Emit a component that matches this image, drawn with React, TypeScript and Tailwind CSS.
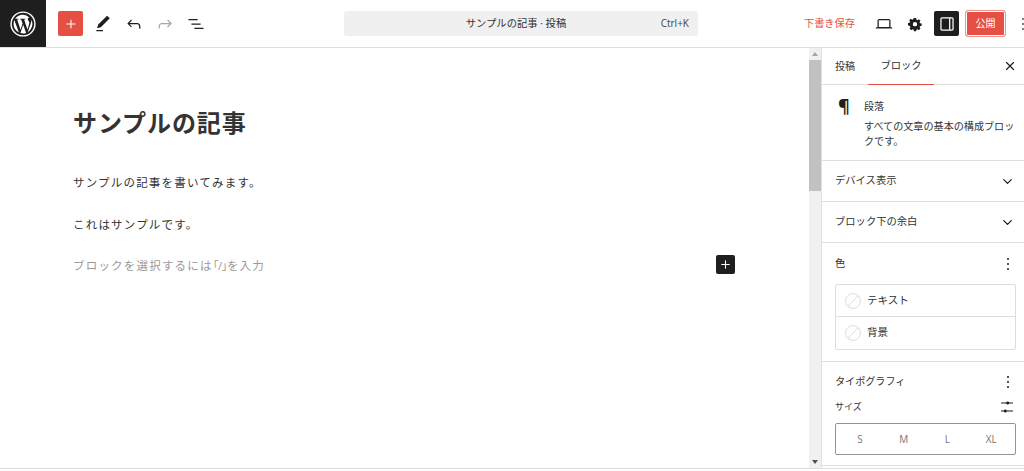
import React from 'react';
import { Plus, X, ChevronDown } from 'lucide-react';

const FONT = "font-['Open_Sans','Noto_Sans_CJK_JP',sans-serif]";

const WpLogo = () => (
  <svg width="26" height="26" viewBox="0 0 24 24" fill="none">
    <circle cx="12" cy="12" r="11" stroke="#fff" strokeWidth="1.3" />
    <path
      d="M3.3 12c0 3.4 2 6.4 4.9 7.8L4 8.4A8.7 8.7 0 0 0 3.3 12zm14.6-.4c0-1.1-.4-1.8-.7-2.4-.4-.7-.8-1.2-.8-1.9 0-.7.6-1.4 1.4-1.4h.1A8.7 8.7 0 0 0 4.7 7.2h.6c.9 0 2.3-.1 2.3-.1.5 0 .5.7 0 .7 0 0-.5.1-1 .1l3.1 9.3 1.9-5.6-1.3-3.7c-.5 0-.9-.1-.9-.1-.5 0-.4-.7 0-.7 0 0 1.4.1 2.3.1.9 0 2.3-.1 2.3-.1.5 0 .5.7 0 .7 0 0-.5.1-1 .1l3.1 9.2.9-2.9c.4-1.1.6-1.9.6-2.6zm-5.7 1.2-2.6 7.5a8.7 8.7 0 0 0 5.3-.1l-.1-.1-2.6-7.3zm7.4-4.9c0 .3.1.6.1.9 0 .9-.2 1.9-.7 3.1l-2.7 7.7A8.7 8.7 0 0 0 19.6 7.9z"
      fill="#fff"
    />
  </svg>
);

const Pencil = () => (
  <svg width="24" height="24" viewBox="0 0 24 24" fill="#1e1e1e">
    <path d="M20.1 5.1 16.9 2 6.2 12.7l-1.3 4.4 4.5-1.3L20.1 5.1zM4 20.8h8v-1.5H4v1.5z" />
  </svg>
);

const Undo = ({ color }: { color: string }) => (
  <svg width="24" height="24" viewBox="0 0 24 24" fill={color}>
    <path d="M18.3 11.7c-.6-.6-1.4-.9-2.3-.9H6.7l2.9-3.3-1.1-1-4.5 5L8.5 16l1-1-2.7-2.7H16c.5 0 .9.2 1.3.5 1 1 1 3.4 1 4.5v.3h1.5v-.2c0-1.5 0-4.3-1.5-5.7z" />
  </svg>
);

const Redo = ({ color }: { color: string }) => (
  <svg width="24" height="24" viewBox="0 0 24 24" fill={color}>
    <path d="M15.6 6.5l-1.1 1 2.9 3.3H8c-.9 0-1.7.3-2.3.9-1.4 1.5-1.4 4.2-1.4 5.6v.2h1.5v-.3c0-1.1 0-3.5 1-4.5.3-.3.7-.5 1.3-.5h9.2L14.5 15l1.1 1.1 4.6-4.6-4.6-5z" />
  </svg>
);

const ListView = () => (
  <svg width="24" height="24" viewBox="0 0 24 24" fill="#1e1e1e">
    <path d="M3 6h11v1.5H3V6zm3.5 5.3h11v1.5h-11v-1.5zm3.5 5.2h11V18H10v-1.5z" />
  </svg>
);

const Laptop = () => (
  <svg width="24" height="24" viewBox="0 0 24 24" fill="#1e1e1e">
    <path d="M20.5 16h-.7V8c0-1.1-.9-2-2-2H6.2c-1.1 0-2 .9-2 2v8h-.7c-.8 0-1.5.7-1.5 1.5h20c0-.8-.7-1.5-1.5-1.5zM5.7 8c0-.3.2-.5.5-.5h11.6c.3 0 .5.2.5.5v7.6H5.7V8z" />
  </svg>
);

const Gear = () => (
  <svg width="24" height="24" viewBox="0 0 24 24" fill="#1e1e1e">
    <path
      fillRule="evenodd"
      clipRule="evenodd"
      d="M10.3 3h3.4l.5 2.5c.5.2 1 .4 1.4.7l2.2-1.4 2.4 2.4-1.4 2.2c.3.4.5.9.7 1.4l2.5.5v3.4l-2.5.5c-.2.5-.4 1-.7 1.4l1.4 2.2-2.4 2.4-2.2-1.4c-.4.3-.9.5-1.4.7l-.5 2.5h-3.4l-.5-2.5c-.5-.2-1-.4-1.4-.7l-2.2 1.4-2.4-2.4 1.4-2.2c-.3-.4-.5-.9-.7-1.4L1.5 14v-3.4l2.5-.5c.2-.5.4-1 .7-1.4L3.3 6.5l2.4-2.4 2.2 1.4c.4-.3.9-.5 1.4-.7L10.3 3zM12 15.5a3.3 3.3 0 1 0 0-6.6 3.3 3.3 0 0 0 0 6.6z"
    />
  </svg>
);

const SidebarToggle = () => (
  <svg width="24" height="24" viewBox="0 0 24 24" fill="#fff">
    <path d="M18 4H6c-1.1 0-2 .9-2 2v12c0 1.1.9 2 2 2h12c1.1 0 2-.9 2-2V6c0-1.1-.9-2-2-2zm-12 1.5h8.5v13H6c-.3 0-.5-.2-.5-.5V6c0-.3.2-.5.5-.5zm12.5 12.5c0 .3-.2.5-.5.5h-2v-13h2c.3 0 .5.2.5.5v12z" />
  </svg>
);

const Sliders = () => (
  <svg width="12" height="12" viewBox="0 0 12 12" fill="#1e1e1e" className="mr-[3px]">
    <path d="M0 2.5h5.2a1.6 1.6 0 0 0 3 0H12v-1H8.2a1.6 1.6 0 0 0-3 0H0v1zM0 10.5h2.8a1.6 1.6 0 0 0 3 0H12v-1H5.8a1.6 1.6 0 0 0-3 0H0v1z" />
  </svg>
);

const NoColor = () => (
  <svg width="16" height="16" viewBox="0 0 16 16" fill="none" stroke="#ddd">
    <circle cx="8" cy="8" r="7.5" />
    <path d="M2.7 13.3 13.3 2.7" />
  </svg>
);

const Kebab = ({ color = '#1e1e1e', className = '' }: { color?: string; className?: string }) => (
  <svg width="14" height="14" viewBox="0 0 14 14" fill={color} className={className}>
    <circle cx="7" cy="2" r="1" />
    <circle cx="7" cy="7" r="1" />
    <circle cx="7" cy="12" r="1" />
  </svg>
);

const ColorRow = ({ label, last }: { label: string; last?: boolean }) => (
  <div className={`flex h-[32px] items-center gap-[6px] pl-[9px] text-[10.5px] text-[#333] ${last ? '' : 'border-b border-[#ddd]'}`}>
    <NoColor />
    <span>{label}</span>
  </div>
);

const CollapsedPanel = ({ label }: { label: string }) => (
  <div className="flex h-[41px] items-center justify-between border-b border-[#e0e0e0] pl-[13px] pr-[9px]">
    <span className="text-[10.3px] text-[#333]">{label}</span>
    <ChevronDown size={15} strokeWidth={2} color="#1e1e1e" />
  </div>
);

const App = () => {
  return (
    <div className={`flex h-[471px] w-[1024px] flex-col overflow-hidden bg-white ${FONT}`}>
      {/* top bar */}
      <header className="flex h-[48px] shrink-0 items-center border-b border-[#e0e0e0] [&>*]:shrink-0">
        <div className="flex h-[47px] w-[46px] items-center justify-center bg-[#1e1e1e]">
          <WpLogo />
        </div>
        <div className="ml-[12px] flex h-[25px] w-[25px] items-center justify-center rounded-[2px] bg-[#e64f44]">
          <Plus size={14} color="#fff" strokeWidth={1.8} />
        </div>
        <div className="ml-[8px] flex items-center gap-[7px] [&>svg]:h-[20px] [&>svg]:w-[24px]">
          <Pencil />
          <Undo color="#1e1e1e" />
          <Redo color="#a8a8a8" />
          <ListView />
        </div>
        <div className="relative ml-[136px] flex h-[25px] w-[354px] items-center justify-center rounded-[3px] bg-[#f0f0f0] pr-[10px] text-[10.3px] text-[#333]">
          <span>サンプルの記事 · 投稿</span>
          <span className="absolute right-[9px] text-[10px] text-[#444]">Ctrl+K</span>
        </div>
        <span className="ml-[106px] w-[51px] text-[10.2px] text-[#e64f44]">下書き保存</span>
        <div className="ml-[19px] flex items-center gap-[11px]">
          <div className="flex w-[20px] justify-center"><Laptop /></div>
          <div className="flex w-[20px] justify-center [&>svg]:h-[16px] [&>svg]:w-[16px]"><Gear /></div>
        </div>
        <div className="ml-[9px] flex h-[25px] w-[25px] items-center justify-center rounded-[2px] bg-[#1e1e1e] [&>svg]:h-[20px] [&>svg]:w-[20px]">
          <SidebarToggle />
        </div>
        <div className="ml-[6px] flex h-[27px] w-[41px] items-center justify-center rounded-[3px] border border-[#f0928b] bg-[#e64f44] text-[10px] text-white shadow-[inset_0_0_0_1px_#fff]">
          公開
        </div>
        <Kebab color="#555" className="ml-[10px]" />
      </header>

      <div className="flex h-[421px] min-h-0 border-b border-[#e0e0e0]">
        {/* editor */}
        <main className="w-[809px] shrink-0 pl-[73px] text-[#333]">
          <h1 className="mt-[57px] text-[24px] font-bold leading-[36px] tracking-[0.9px]">サンプルの記事</h1>
          <p className="mt-[32px] text-[11.5px] leading-[20px] tracking-[1.2px]">サンプルの記事を書いてみます。</p>
          <p className="mt-[22px] text-[11.5px] leading-[20px] tracking-[1.2px]">これはサンプルです。</p>
          <div className="mt-[21px] flex h-[20px] items-center">
            <p className="w-[643px] text-[11.5px] tracking-[1.2px] text-[#9a9a9a]">
              ブロックを選択するには
              <span className="tracking-[-0.5px] [font-feature-settings:'palt']">「/」</span>
              を入力
            </p>
            <div className="flex h-[19px] w-[19px] -translate-y-[2px] items-center justify-center rounded-[2px] bg-[#1e1e1e]">
              <Plus size={13} color="#fff" strokeWidth={2} />
            </div>
          </div>
        </main>

        {/* scrollbar */}
        <div className="flex w-[12px] shrink-0 flex-col items-center bg-[#f0f0f0]">
          <div className="flex h-[12px] w-full items-center justify-center">
            <div className="h-0 w-0 border-x-[3.5px] border-b-[4px] border-x-transparent border-b-[#a3a3a3]" />
          </div>
          <div className="h-[131px] w-full bg-[#c1c1c1]" />
          <div className="flex-1" />
          <div className="flex h-[13px] w-full items-center justify-center">
            <div className="h-0 w-0 border-x-[3.5px] border-t-[4px] border-x-transparent border-t-[#505050]" />
          </div>
        </div>

        {/* sidebar */}
        <aside className="min-w-0 flex-1 border-l border-[#e0e0e0]">
          <div className="flex h-[37px] items-center border-b border-[#e0e0e0] pl-[13px] pr-[7px] text-[#333]">
            <span className="w-[33px] text-[10px]">投稿</span>
            <span className="flex h-[37px] w-[66px] items-center justify-center border-b-[1.5px] border-[#e64f44] text-[10.3px]">ブロック</span>
            <X size={14} strokeWidth={2} color="#1e1e1e" className="ml-auto" />
          </div>

          <div className="flex h-[76px] gap-[13px] border-b border-[#e0e0e0] pl-[16px] pt-[12px]">
            <span className="w-[13px] text-[18px] font-bold leading-[18px] text-[#1e1e1e]">¶</span>
            <div className="text-[10.1px] text-[#333]">
              <p className="text-[10px] leading-[18px]">段落</p>
              <p className="mt-[4px] w-[156px] leading-[15px]">すべての文章の基本の構成ブロックです。</p>
            </div>
          </div>

          <CollapsedPanel label="デバイス表示" />
          <CollapsedPanel label="ブロック下の余白" />

          <div className="h-[119px] border-b border-[#e0e0e0] pl-[13px] pr-[9px]">
            <div className="flex h-[41px] items-center justify-between">
              <span className="text-[10.3px] text-[#333]">色</span>
              <Kebab />
            </div>
            <div className="w-[181px] rounded-[2px] border border-[#ddd]">
              <ColorRow label="テキスト" />
              <ColorRow label="背景" last />
            </div>
          </div>

          <div className="border-b border-[#e0e0e0] pb-[10px] pl-[13px] pr-[9px]">
            <div className="flex h-[39px] items-center justify-between">
              <span className="text-[10.1px] text-[#333]">タイポグラフィ</span>
              <Kebab />
            </div>
            <div className="flex h-[12px] w-[181px] items-center justify-between text-[9px] text-[#333]">
              <span>サイズ</span>
              <Sliders />
            </div>
            <div className="mt-[10px] grid h-[32px] w-[181px] grid-cols-4 items-center rounded-[2px] border border-[#949494] px-[2px] text-center text-[10px] text-[#777]">
              <span>S</span>
              <span>M</span>
              <span>L</span>
              <span>XL</span>
            </div>
          </div>
        </aside>
      </div>
    </div>
  );
};

export default App;
